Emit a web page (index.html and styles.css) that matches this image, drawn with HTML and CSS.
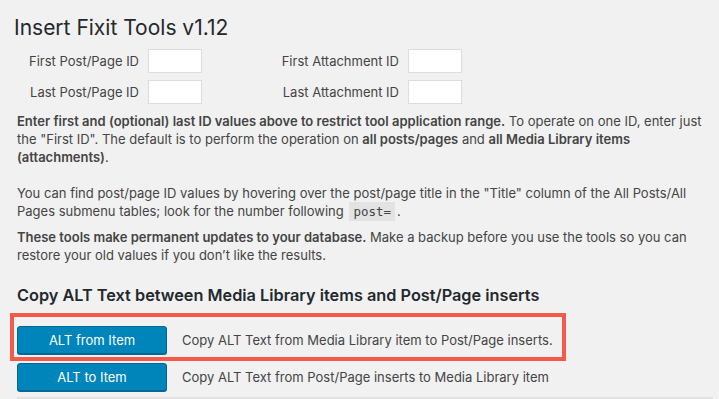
FILE: index.html
```html
<!DOCTYPE html>
<html>
  <head>
    <meta charset="utf-8">
    <title>Insert Fixit Tools</title>
    <link rel="stylesheet" href="styles.css">
  </head>
  <body>
  <div class="wrap">
    <h1>Insert Fixit Tools v1.12</h1>

    <div class="range">
      <label class="lbl">First Post/Page ID</label><input class="idbox" type="text">
      <label class="lbl">First Attachment ID</label><input class="idbox" type="text">
      <label class="lbl">Last Post/Page ID</label><input class="idbox" type="text">
      <label class="lbl">Last Attachment ID</label><input class="idbox" type="text">
    </div>

    <p class="first"><strong>Enter first and (optional) last ID values above to restrict tool application range.</strong> To operate on one ID, enter just
    the "First ID". The default is to perform the operation on <strong>all posts/pages</strong> and <strong>all Media Library items
    (attachments)</strong>.</p>

    <p class="spaced">You can find post/page ID values by hovering over the post/page title in the "Title" column of the All Posts/All
    Pages submenu tables; look for the number following <code>post=</code>.</p>

    <p><strong>These tools make permanent updates to your database.</strong> Make a backup before you use the tools so you can
    restore your old values if you don&rsquo;t like the results.</p>

    <h2>Copy ALT Text between Media Library items and Post/Page inserts</h2>

    <div class="tools">
      <div class="tool marked">
        <button class="btn">ALT from Item</button>
        <span class="desc">Copy ALT Text from Media Library item to Post/Page inserts.</span>
      </div>
      <div class="tool">
        <button class="btn">ALT to Item</button>
        <span class="desc">Copy ALT Text from Post/Page inserts to Media Library item</span>
      </div>
    </div>
  </div>
  </body>
</html>
```

FILE: styles.css
```css
body { margin: 0; background-color: #f1f1f1; color: #444; font-family: Inter, "Open Sans", sans-serif; font-size: 13px; line-height: 18px; }
.wrap { padding: 14px 0 0 14px; overflow: hidden; height: 399px; box-sizing: border-box; }
h1 { margin: 0 0 7px 0; font-size: 21px; font-weight: 400; line-height: 28px; color: #23282d; }
h2 { margin: 20px 0 7px 3px; font-size: 16.3px; font-weight: 600; line-height: 22px; color: #23282d; }
p { margin: 0 0 7px 3px; width: 700px; }
p.first { margin-top: 8px; }
p.spaced { margin-top: 18px; }
strong { font-weight: 600; }
code { font-family: "DejaVu Sans Mono", monospace; font-size: 12.5px; background: #e3e3e3; padding: 2px 4px; margin: 0 2px; }
.range { display: grid; grid-template-columns: 125px 54px 188px 54px; column-gap: 9px; row-gap: 7px; align-items: center; }
.lbl { text-align: right; color: #444; }
.idbox { box-sizing: border-box; width: 54px; height: 24px; margin: 0; border: 1px solid #ddd; background: #fff; }
.tools { border-bottom: 2px solid #e2e2e2; width: 696px; margin-left: 3px; padding-bottom: 6px; }
.tool { display: flex; align-items: center; gap: 15px; }
.tool.marked { box-sizing: border-box; width: 556px; margin: 0 0 2px -7px; padding: 9px 0 3px 3px; border: 4px solid #f25a4b; }
.btn { box-sizing: border-box; width: 150px; height: 28px; background: #0085ba; border: 1px solid #006799; border-radius: 3px; color: #fff; font-family: inherit; font-size: 13px; box-shadow: 0 1px 0 #006799; }
.desc { color: #444; }
```
